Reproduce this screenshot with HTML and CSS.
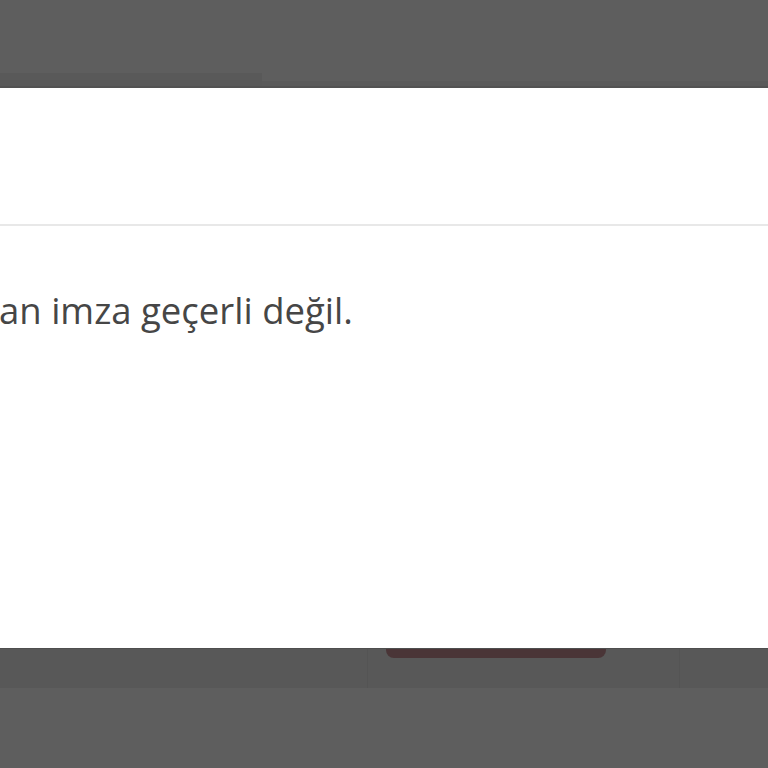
FILE: index.html
```html
<!DOCTYPE html>
<html lang="tr">
<head>
<meta charset="utf-8">
<title>İmza</title>
<link rel="stylesheet" href="styles.css">
</head>
<body>
<div class="backdrop-top">
  <div class="band-left"></div>
  <div class="band-right"></div>
</div>
<div class="dialog">
  <div class="dialog-header"></div>
  <div class="dialog-body">
    <p class="message">an imza geçerli değil.</p>
  </div>
</div>
<div class="backdrop-bottom">
  <div class="cell cell-a"></div>
  <div class="cell cell-b"><div class="btn-edge"></div></div>
  <div class="cell cell-c"></div>
</div>
</body>
</html>
```
FILE: styles.css
```css
html, body {
  margin: 0;
  padding: 0;
}
body {
  width: 768px;
  height: 768px;
  overflow: hidden;
  background: #5e5e5e;
  font-family: "Open Sans", "Noto Sans", sans-serif;
}
.backdrop-top {
  height: 88px;
  display: flex;
  align-items: flex-end;
}
.band-left {
  width: 262px;
  height: 15px;
  background: #595959;
  border-bottom: 2px solid #525252;
  box-sizing: border-box;
}
.band-right {
  flex: 1;
  height: 7px;
  background: #5a5a5a;
  border-bottom: 2px solid #525252;
  box-sizing: border-box;
}
.dialog {
  background: #ffffff;
  height: 560px;
  display: flex;
  flex-direction: column;
}
.dialog-header {
  height: 136px;
  border-bottom: 2px solid #e8e8e8;
}
.dialog-body {
  padding-top: 59px;
}
.message {
  margin: 0 0 0 -1px;
  font-size: 36.5px;
  line-height: 50px;
  color: #464646;
  white-space: nowrap;
}
.backdrop-bottom {
  height: 40px;
  background: #585858;
  display: flex;
  border-top: 1px solid #4e4e4e;
  box-sizing: border-box;
}
.cell {
  height: 100%;
}
.cell-a {
  width: 367px;
  border-right: 1px solid #545454;
}
.cell-b {
  width: 312px;
  border-right: 1px solid #545454;
  padding-left: 18px;
  box-sizing: border-box;
}
.btn-edge {
  width: 220px;
  height: 9px;
  background: #4a3537;
  border-radius: 0 0 8px 8px;
}
.cell-c {
  flex: 1;
}
```
